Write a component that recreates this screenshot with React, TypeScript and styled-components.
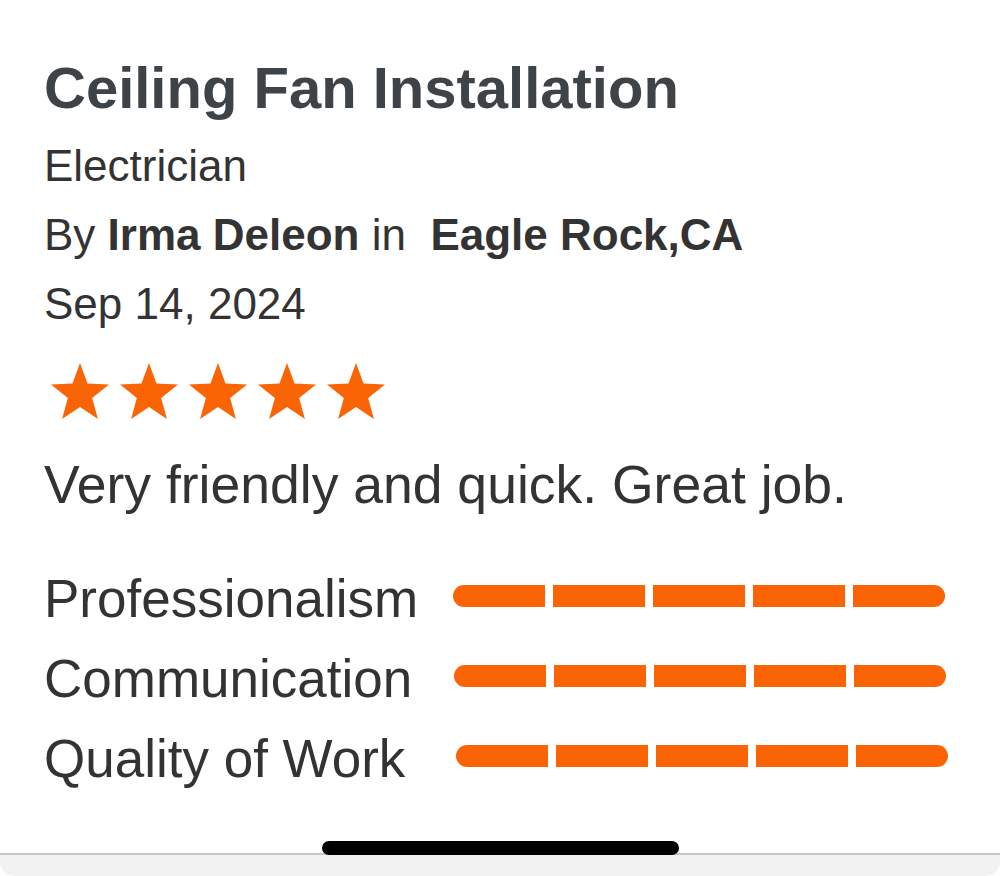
import React from 'react';
import styled, {createGlobalStyle} from 'styled-components';

const GlobalStyle = createGlobalStyle`
  html, body {
    margin: 0;
    padding: 0;
    background: #fff;
  }
  body {
    font-family: "Liberation Sans", Arial, Helvetica, sans-serif;
    color: #333;
  }
`

const Screen = styled.div`
  height: 876px;
  display: flex;
  flex-direction: column;
  overflow: hidden;
`

const Card = styled.div`
  flex: 1;
  padding: 55px 0 0 44px;
  background: #fff;
`

const Title = styled.h1`
  margin: 0;
  font-size: 58px;
  line-height: 66px;
  font-weight: 700;
  color: #3e4347;
`

const Meta = styled.div`
  margin-top: 10px;
  font-size: 44px;
  line-height: 69px;
  color: #333;
  >b{
    font-weight: 700;
  }
`

const Stars = styled.div`
  display: flex;
  gap: 11px;
  margin: 25px 0 0 7px;
`

const Review = styled.p`
  margin: 34px 0 0;
  font-size: 53.5px;
  line-height: 64px;
  color: #333;
`

const Ratings = styled.div`
  margin-top: 42px;
  display: grid;
  grid-template-columns: 409px 495px;
  grid-auto-rows: 80px;
  align-items: center;
`

const Label = styled.div`
  font-size: 53px;
  line-height: 80px;
  color: #333;
  white-space: nowrap;
`

const Bar = styled.div<{shift: number}>`
  display: flex;
  gap: 8px;
  height: 22px;
  margin: -6px ${p => 3 - p.shift}px 0 ${p => p.shift}px;
`

const Segment = styled.div<{filled: boolean}>`
  flex: 1;
  background: ${p => p.filled ? '#fb6405' : '#e3e3e3'};
  &:first-child{
    border-radius: 11px 0 0 11px;
  }
  &:last-child{
    border-radius: 0 11px 11px 0;
  }
`

const Footer = styled.div`
  position: relative;
  height: 21px;
  border-top: 2px solid #c6c6c6;
  background: #f2f2f2;
  border-radius: 0 0 14px 14px;
`

const HomeIndicator = styled.div`
  position: absolute;
  left: 322px;
  top: -14px;
  width: 357px;
  height: 14px;
  border-radius: 7px;
  background: #000;
`

function Star() {
    return (
        <svg width="58" height="56" viewBox="1.27 0.6 21.46 20.4" preserveAspectRatio="none">
            <path
                d="M12 0.6l2.78 7.45 7.95.34-6.24 4.94 2.14 7.67L12 16.6l-6.63 4.4 2.14-7.67L1.27 8.39l7.95-.34z"
                fill="#fb6405"
            />
        </svg>
    )
}

const ratings = [
    {name: 'Professionalism', score: 5, shift: 0},
    {name: 'Communication', score: 5, shift: 1},
    {name: 'Quality of Work', score: 5, shift: 3},
]

function App() {
    return (
        <Screen>
            <GlobalStyle/>
            <Card>
                <Title>Ceiling Fan Installation</Title>
                <Meta>
                    <div>Electrician</div>
                    <div>By <b>Irma Deleon</b> in&nbsp;&nbsp;<b>Eagle Rock,CA</b></div>
                    <div>Sep 14, 2024</div>
                </Meta>
                <Stars>
                    {[1, 2, 3, 4, 5].map(i => <Star key={i}/>)}
                </Stars>
                <Review>Very friendly and quick. Great job.</Review>
                <Ratings>
                    {ratings.map(r =>
                        <React.Fragment key={r.name}>
                            <Label>{r.name}</Label>
                            <Bar shift={r.shift}>
                                {[1, 2, 3, 4, 5].map(i => <Segment key={i} filled={i <= r.score}/>)}
                            </Bar>
                        </React.Fragment>
                    )}
                </Ratings>
            </Card>
            <Footer>
                <HomeIndicator/>
            </Footer>
        </Screen>
    );
}

export default App;
